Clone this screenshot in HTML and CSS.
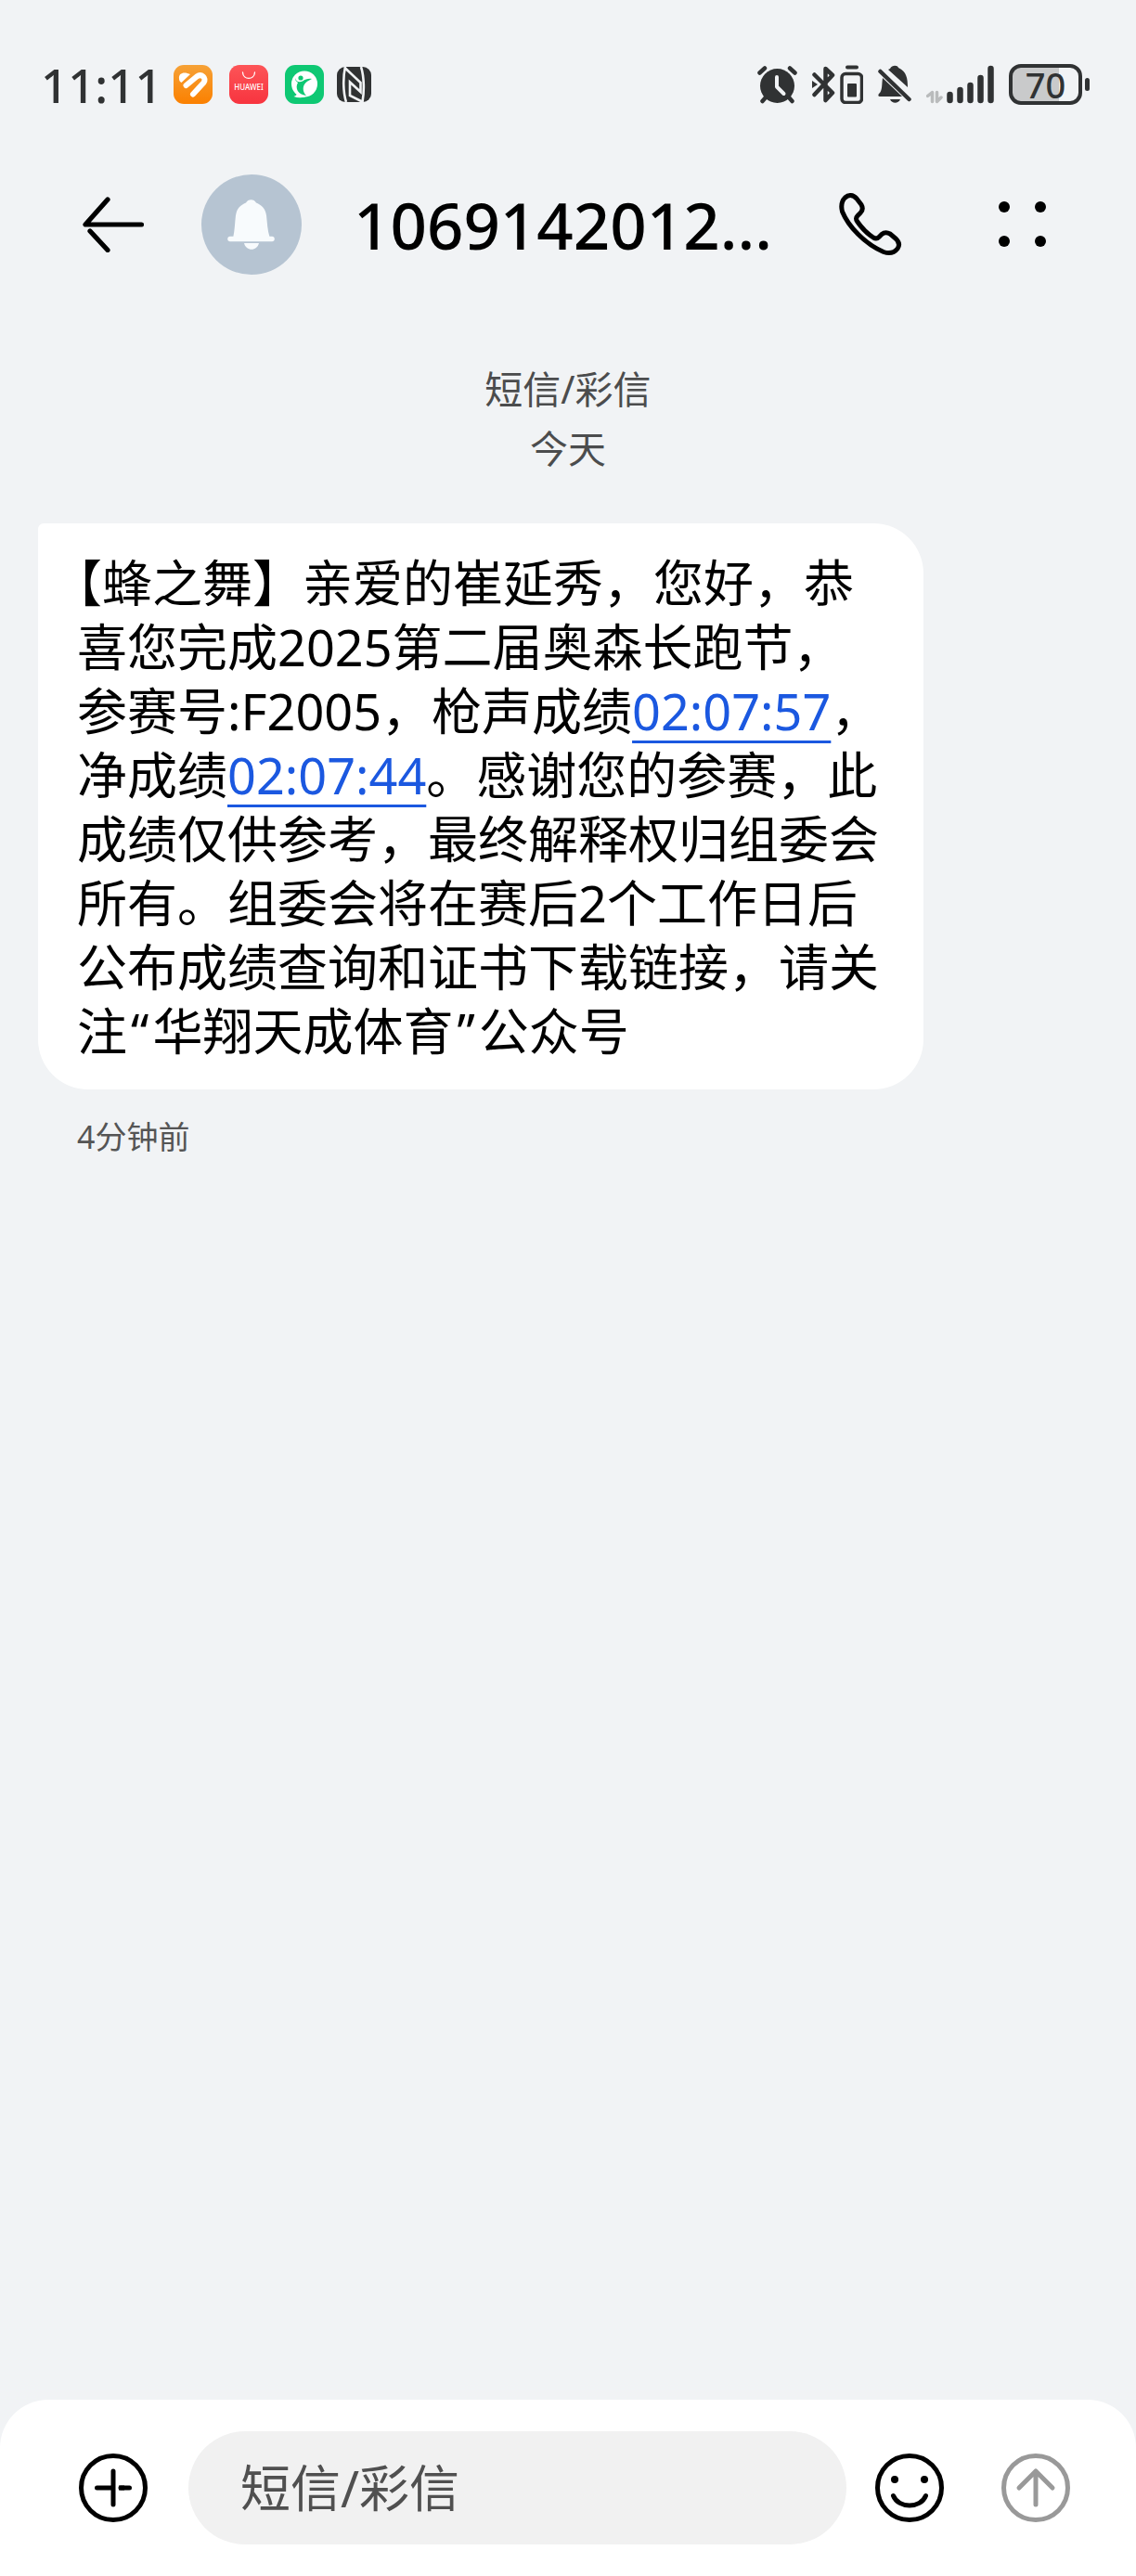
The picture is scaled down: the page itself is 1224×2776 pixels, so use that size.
FILE: index.html
```html
<!DOCTYPE html>
<html lang="zh-CN">
<head>
  <meta charset="UTF-8" />
  <meta name="viewport" content="width=device-width, initial-scale=1" />
  <title>短信</title>
  <link rel="stylesheet" href="styles.css">
</head>
<body>
  <div class="status-bar">
    <div class="status-left">
      <span class="clock">11:11</span>
      <!-- health -->
      <svg width="42" height="42" viewBox="0 0 42 42">
        <defs>
          <linearGradient id="orange" x1="0" y1="0" x2="0" y2="1">
            <stop offset="0" stop-color="#f6a136"/>
            <stop offset="1" stop-color="#fb8000"/>
          </linearGradient>
        </defs>
        <rect width="42" height="42" rx="11" fill="url(#orange)"/>
        <path d="M6 15C5 8 12 7 18 10L8.500 19C7 18 6 17 6 15Z" fill="#fff"/>
        <path d="M13.500 22L25 12.500C30 9 36 14 32.500 19L21 31.500" fill="none" stroke="#fff" stroke-width="6" stroke-linecap="round" stroke-linejoin="round"/>
      </svg>
      <!-- app store -->
      <svg width="42" height="42" viewBox="0 0 42 42">
        <defs>
          <linearGradient id="red" x1="0" y1="0" x2="0" y2="1">
            <stop offset="0" stop-color="#fd5457"/>
            <stop offset="1" stop-color="#f7343f"/>
          </linearGradient>
        </defs>
        <rect width="42" height="42" rx="11" fill="url(#red)"/>
        <path d="M14.500 8C15 16.500 27 16.500 27.500 8" fill="none" stroke="#fff" stroke-width="1.300" stroke-linecap="round"/>
        <text x="21" y="27" class="store-name">HUAWEI</text>
      </svg>
      <!-- sport -->
      <svg width="42" height="42" viewBox="0 0 42 42">
        <rect width="42" height="42" rx="11" fill="#0ec873"/>
        <circle cx="21" cy="20.500" r="14" fill="#fff"/>
        <path d="M13 30C13 32 12 33 9.500 34C15 36 21 35.500 24 33Z" fill="#fff"/>
        <circle cx="17" cy="14" r="2.600" fill="#0ec873"/>
        <path d="M11 14C12 18 15 19 19 17.500C22 15.500 25 14.500 29 15C25 17 22.500 18.500 21 21C18.500 25 20 30 23 33C14 32 10.500 25 14 19C12 18 11 16 11 14Z" fill="#0ec873"/>
      </svg>
      <!-- nfc -->
      <svg class="nfc" width="37" height="38" viewBox="0 0 37 38">
        <rect width="37" height="38" rx="9" fill="#303233"/>
        <path d="M9 0C6.500 11 6.500 27 10 38M8.500 1L25.500 17V27L14 16.500V31L28 38M26 0C29.500 11 29.500 27 27.500 38" fill="none" stroke="#f1f3f5" stroke-width="2.600"/>
      </svg>
    </div>
    <div class="status-right">
      <!-- alarm -->
      <svg width="43" height="42" viewBox="0 0 43 42">
        <circle cx="21.500" cy="22.500" r="18.500" fill="#303233"/>
        <path d="M2.500 8.500L8 3.500M40.500 8.500L35 3.500M9 35L5.500 39M34 35L37.500 39" stroke="#303233" stroke-width="4.500" stroke-linecap="round"/>
        <path d="M21 13V23.500L28.500 31" fill="none" stroke="#f1f3f5" stroke-width="4" stroke-linecap="round" stroke-linejoin="round"/>
      </svg>
      <!-- bluetooth with device battery -->
      <svg width="55" height="42" viewBox="0 0 55 42">
        <path d="M2.500 10.500L22 30L14.500 38V4L22 11L2.500 32" fill="none" stroke="#303233" stroke-width="4.500" stroke-linecap="round" stroke-linejoin="round"/>
        <path d="M0 17L6 21L0 25Z" fill="#303233"/>
        <path d="M38 2.500H48" stroke="#303233" stroke-width="4" stroke-linecap="round"/>
        <rect x="32" y="9.500" width="21.500" height="31" rx="4" fill="none" stroke="#303233" stroke-width="3.500"/>
        <rect x="38" y="20" width="10" height="14.500" rx="1" fill="#303233"/>
      </svg>
      <!-- muted bell -->
      <svg width="36" height="42" viewBox="0 0 36 42">
        <path d="M5 14L26 34H2C0 34 0 32 1 31C5 28 4 20 5 14ZM13 4C15 0 21 0 22 3C31 7 32 15 32 24L11 5ZM13 37H24C22 42 15 42 13 37Z" fill="#303233"/>
        <path d="M2.500 7L33.500 37" stroke="#303233" stroke-width="4.500" stroke-linecap="round"/>
      </svg>
      <!-- signal -->
      <svg width="73" height="42" viewBox="0 0 73 42">
        <path d="M1.500 33.500L6.500 29.500V39.500M11.500 29.500V39.500L16 35" fill="none" stroke="#b9bbbc" stroke-width="3.500" stroke-linecap="round" stroke-linejoin="round"/>
        <path d="M25.500 32V38M36.500 27V38M47.500 22V38M58.500 14V38M69.500 4V38" stroke="#303233" stroke-width="6.500" stroke-linecap="round"/>
      </svg>
      <!-- battery -->
      <div class="battery">
        <span class="battery-level">70</span>
      </div>
    </div>
  </div>

  <header class="chat-header">
    <button class="icon-btn" aria-label="返回">
      <svg width="66" height="60" viewBox="0 0 66 60" fill="none" stroke="#000" stroke-width="5.200" stroke-linecap="round" stroke-linejoin="round">
        <path d="M27 3L3 30H63.500"/>
        <path d="M8 37L27 57.500"/>
      </svg>
    </button>
    <div class="avatar">
      <svg width="108" height="108" viewBox="0 0 108 108" fill="#f8fbfd">
        <path d="M34 69C36 60 36 52 37 44C38 37 42 33 48 30.500C50 26 57 26 59 30.500C65 33 69 37 70 44C71 52 71 60 74 69Z"/>
        <path d="M31 69.500H76" stroke="#f8fbfd" stroke-width="5.500" stroke-linecap="round"/>
        <path d="M46 74H62C60 83 48 83 46 74Z"/>
      </svg>
    </div>
    <h1 class="contact">1069142012...</h1>
    <button class="icon-btn" aria-label="拨打电话">
      <svg width="68" height="68" viewBox="0 0 68 68" fill="none" stroke="#000" stroke-width="5" stroke-linejoin="round">
        <path d="M19 6L24 12.500C26 16 25.500 19 23 21.500L20 24.500C18 26.500 18 28 19.500 30.500C24 37 30 43.500 37 48C39.500 49.500 41 49.500 43 47.500L46 44.500C49 42 51.500 42 55 44L61.500 49.500C65 53 65.500 56.500 63 60C59 65 54 65.500 48 63.500C28 55 10 36 3.500 20C2 14 2.500 9 6.500 5C10.500 1.500 15 1.500 19 6Z"/>
      </svg>
    </button>
    <button class="icon-btn more" aria-label="更多">
      <svg width="52" height="52" viewBox="0 0 52 52">
        <circle cx="6" cy="7" r="6"/>
        <circle cx="45" cy="7" r="6"/>
        <circle cx="6" cy="44" r="6"/>
        <circle cx="45" cy="44" r="6"/>
      </svg>
    </button>
  </header>

  <main class="messages">
    <div class="day">
      <p>短信/彩信</p>
      <p>今天</p>
    </div>
    <p class="bubble">【蜂之舞】亲爱的崔延秀，您好，恭喜您完成2025第二届奥森长跑节，参赛号:F2005，枪声成绩<a href="#">02:07:57</a>，净成绩<a href="#">02:07:44</a>。感谢您的参赛，此成绩仅供参考，最终解释权归组委会所有。组委会将在赛后2个工作日后公布成绩查询和证书下载链接，请关注<span class="quote">“</span>华翔天成体育<span class="quote">”</span>公众号</p>
    <p class="sent-time">4分钟前</p>
  </main>

  <form class="composer">
    <button type="button" class="icon-btn" aria-label="添加">
      <svg width="76" height="76" viewBox="0 0 76 76" fill="none" stroke="#000" stroke-width="5" stroke-linecap="round">
        <circle cx="38" cy="38" r="34.500"/>
        <path d="M38 20V56M20.500 38H35M46 38H55.500"/>
        <path d="M44 38H50" stroke-linecap="butt"/>
      </svg>
    </button>
    <input class="message-input" type="text" placeholder="短信/彩信" aria-label="短信/彩信">
    <button type="button" class="icon-btn" aria-label="表情">
      <svg width="76" height="76" viewBox="0 0 76 76" fill="none" stroke="#000" stroke-width="5" stroke-linecap="round">
        <circle cx="38" cy="38" r="34.500"/>
        <path d="M20.500 46.500C26 60.500 50 60.500 55.500 46.500"/>
        <circle cx="22" cy="29" r="4" fill="#000" stroke="none"/>
        <circle cx="54" cy="29" r="4" fill="#000" stroke="none"/>
      </svg>
    </button>
    <button type="submit" class="icon-btn send" aria-label="发送">
      <svg width="76" height="76" viewBox="0 0 76 76" fill="none" stroke="#999" stroke-width="5" stroke-linecap="round" stroke-linejoin="round">
        <circle cx="38" cy="38" r="34.500"/>
        <path d="M38 20V56M20 38L38 20L56 38"/>
      </svg>
    </button>
  </form>
</body>
</html>
```
FILE: styles.css
```css
* {
  box-sizing: border-box;
}

body {
  margin: 0;
  min-height: 100vh;
  display: flex;
  flex-direction: column;
  background: #f1f3f5;
  color: #000;
  font-family: "Noto Sans", "Noto Sans CJK SC", sans-serif;
}

p, h1 {
  margin: 0;
}

svg {
  display: block;
}

.icon-btn {
  padding: 0;
  border: none;
  background: none;
  flex: none;
  cursor: pointer;
}

/* status bar */
.status-bar {
  display: flex;
  justify-content: space-between;
  align-items: center;
  height: 70px;
  margin-top: 56px;
  padding: 0 50px 0 44px;
}

.status-left {
  display: flex;
  align-items: center;
  gap: 18px;
}

.clock {
  width: 125px;
  color: #303233;
  font-size: 51px;
  font-weight: 500;
  line-height: 70px;
}

.nfc {
  margin-left: -4px;
}

.store-name {
  fill: #fff;
  font-size: 8px;
  font-weight: 500;
  text-anchor: middle;
}

.status-right {
  display: flex;
  align-items: center;
  gap: 16px;
}

.battery {
  position: relative;
  width: 79px;
  height: 44px;
  margin-right: 8px;
  border: 4px solid #303233;
  border-radius: 13px;
  background: linear-gradient(to right, #c9cacb 70%, transparent 70%);
}

.battery::after {
  content: "";
  position: absolute;
  top: 11px;
  right: -12px;
  width: 5px;
  height: 14px;
  border-radius: 3px;
  background: #303233;
}

.battery-level {
  display: block;
  color: #303233;
  font-size: 38px;
  font-weight: 500;
  line-height: 36px;
  text-align: center;
}

/* header */
.chat-header {
  display: flex;
  align-items: center;
  height: 232px;
  padding: 0 96px 0 89px;
}

.avatar {
  flex: none;
  width: 108px;
  height: 108px;
  margin: 0 56px 0 62px;
  border-radius: 50%;
  background: #b6c4d2;
}

.contact {
  flex: 1;
  font-size: 69px;
  font-weight: 500;
  line-height: 92px;
  white-space: nowrap;
}

.more {
  margin-left: 104px;
}

/* messages */
.messages {
  flex: 1;
  padding: 29px 41px 0;
}

.day {
  margin-bottom: 49px;
  color: #4b4c4d;
  font-size: 41px;
  line-height: 64px;
  text-align: center;
}

.bubble {
  max-width: 954px;
  padding: 30px 42px 28px;
  border-radius: 6px 54px 54px 54px;
  background: #fff;
  font-size: 54px;
  line-height: 69px;
  text-spacing-trim: trim-start;
}

.bubble a {
  color: #1b58e0;
  text-decoration: underline 3px;
  text-underline-offset: 11px;
  text-decoration-skip-ink: none;
}

.quote {
  padding: 0 4px;
}

.sent-time {
  margin-top: 26px;
  padding-left: 42px;
  color: #555;
  font-size: 34px;
  line-height: 50px;
}

/* composer */
.composer {
  display: flex;
  align-items: center;
  padding: 34px 70px 34px 84px;
  border-radius: 52px 52px 0 0;
  background: #fff;
}

.message-input {
  flex: 1;
  min-width: 0;
  height: 122px;
  margin: 0 30px 0 43px;
  padding: 0 56px;
  border: none;
  border-radius: 61px;
  background: #f1f1f1;
  font-family: inherit;
  font-size: 54px;
}

.message-input::placeholder {
  color: #505050;
  opacity: 1;
}

.send {
  margin-left: 60px;
}
```
